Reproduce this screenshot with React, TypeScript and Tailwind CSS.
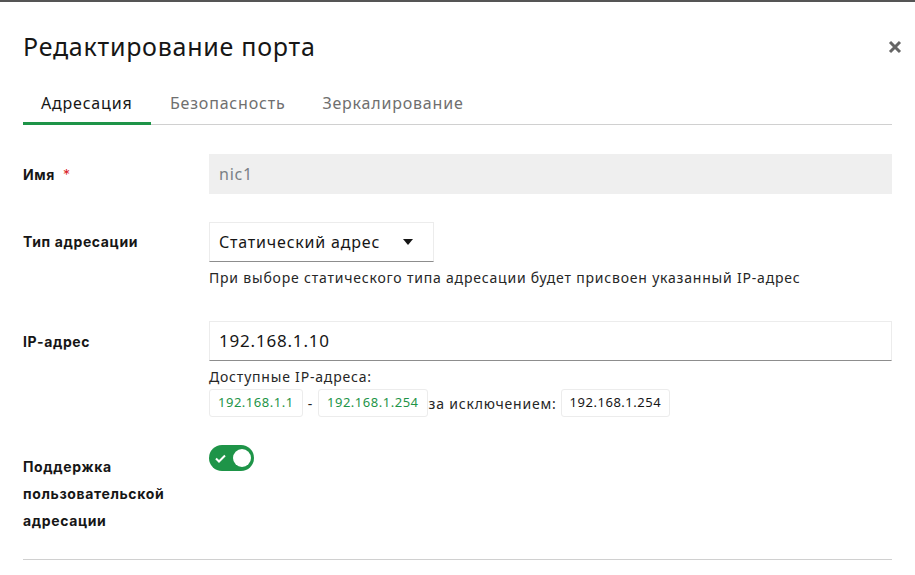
import React from 'react';

const font = { fontFamily: '"Noto Sans", "Open Sans", sans-serif', letterSpacing: '0.05em' };

const Label: React.FC<{ children: React.ReactNode; required?: boolean }> = ({ children, required }) => (
  <div className="w-[186px] shrink-0 text-[14px] font-bold leading-[27px] tracking-[0.045em] text-[#161616]" style={{ fontFamily: 'Inter, "Noto Sans", sans-serif' }}>
    {children}
    {required && <span className="ml-2 font-normal text-[#da1e28]">*</span>}
  </div>
);

const Chip: React.FC<{ children: React.ReactNode; green?: boolean }> = ({ children, green }) => (
  <span className={`inline-flex h-[28px] items-center rounded-[3px] border border-[#ececec] px-2 text-[13px] tracking-[0.04em] ${green ? 'text-[#1e9448]' : 'text-[#161616]'}`}>
    {children}
  </span>
);

export default function App() {
  return (
    <div className="h-[575px] w-[915px] overflow-hidden border-t-2 border-[#555] bg-white" style={font}>
      <div className="px-[23px]">
        <div className="flex h-[89px] items-center justify-between">
          <h1 className="text-[25px] font-normal tracking-[0.03em] text-[#161616]">Редактирование порта</h1>
          <svg width="14" height="14" viewBox="0 0 14 14" className="mr-[-10px]">
            <path d="M2 2L12 12M12 2L2 12" stroke="#666" strokeWidth="3" strokeLinecap="butt" />
          </svg>
        </div>

        <div className="flex h-[34px] border-b border-[#d0d0d0] text-[16px]">
          <div className="-mb-px w-[128px] border-b-[3px] border-[#1e9448] pl-[18px] text-[#161616]">Адресация</div>
          <div className="pl-[19px] text-[#6f6f6f]">Безопасность</div>
          <div className="pl-[37px] text-[#6f6f6f]">Зеркалирование</div>
        </div>

        <div className="mt-[29px] flex items-center">
          <Label required>Имя</Label>
          <div className="flex h-[40px] flex-1 items-center bg-[#efefef] px-[10px] text-[16px] text-[#7a7f86]">nic1</div>
        </div>

        <div className="mt-[28px] flex">
          <div className="pt-[6px]"><Label>Тип адресации</Label></div>
          <div>
            <div className="flex h-[40px] w-[225px] items-center justify-between border border-b-[#8d8d8d] border-[#ececec] pl-[9px] pr-[20px] text-[16px] text-[#161616]">
              <span>Статический адрес</span>
              <svg width="10" height="6" viewBox="0 0 10 6"><path d="M0 0H10L5 6Z" fill="#161616" /></svg>
            </div>
            <div className="mt-[5px] text-[14px] text-[#262626]">При выборе статического типа адресации будет присвоен указанный IP-адрес</div>
          </div>
        </div>

        <div className="mt-[33px] flex">
          <div className="pt-[7px]"><Label>IP-адрес</Label></div>
          <div className="flex-1">
            <div className="flex h-[40px] items-center border border-b-[#8d8d8d] border-[#ececec] px-[9px] text-[17px] text-[#161616]">192.168.1.10</div>
            <div className="mt-[5px] text-[14px] text-[#262626]">Доступные IP-адреса:</div>
            <div className="mt-[2px] flex items-center text-[14px] text-[#262626]">
              <Chip green>192.168.1.1</Chip>
              <span className="mx-[5px]">-</span>
              <Chip green>192.168.1.254</Chip>
              <span className="ml-[1px] mr-[4px]">за исключением:</span>
              <Chip>192.168.1.254</Chip>
            </div>
          </div>
        </div>

        <div className="mt-[28px] flex">
          <div className="pt-[8px]"><Label>Поддержка пользовательской адресации</Label></div>
          <div className="flex h-[26px] w-[45px] items-center justify-between rounded-full bg-[#1e9448] pl-[6px] pr-[3px]">
            <svg width="11" height="9" viewBox="0 0 11 9"><path d="M1 4.5L4 7.5L10 1.5" stroke="white" strokeWidth="2" fill="none" /></svg>
            <span className="h-[18px] w-[18px] rounded-full bg-white" />
          </div>
        </div>

        <div className="mt-[25px] border-b border-[#d0d0d0]" />
      </div>
    </div>
  );
}
